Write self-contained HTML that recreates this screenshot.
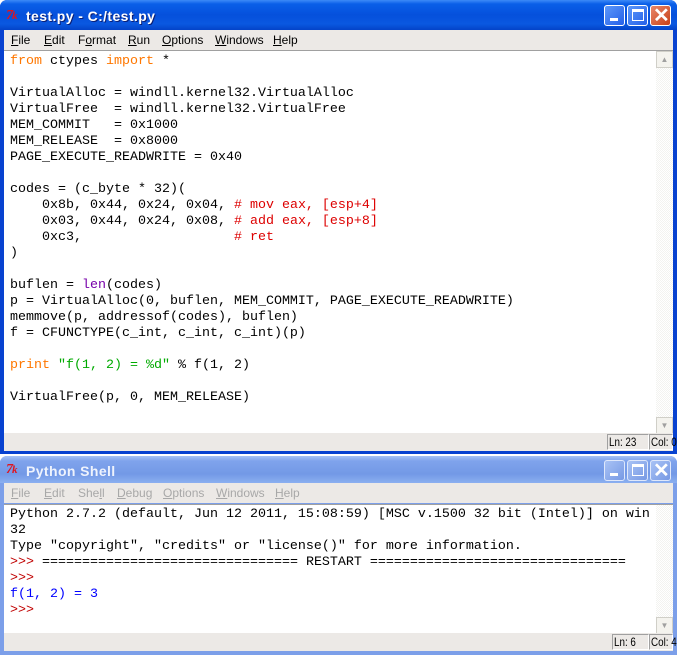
<!DOCTYPE html>
<html><head><meta charset="utf-8"><style>
*{margin:0;padding:0;box-sizing:border-box}
body{width:677px;height:655px;background:#fff;position:relative;overflow:hidden;font-family:"Liberation Sans",sans-serif}
.win{position:absolute;left:0;width:677px;border-radius:7px 7px 0 0;background:#0842d0;}
.title{position:absolute;left:0;top:0;right:0;height:30px;border-radius:7px 7px 0 0;background:linear-gradient(#3d8af7 0,#0a5fe8 4px,#0550dc 15px,#0a58e0 24px,#0443c8 30px);}
.ina .title{background:linear-gradient(#a6c2f5 0,#7fa3ec 5px,#7399e6 18px,#8bb0f0 27px)}
.ina{background:#7c9fe9}
.ttext{position:absolute;left:26px;top:8px;color:#fff;font-weight:bold;font-size:14px;letter-spacing:0.4px;white-space:nowrap;text-shadow:1px 1px #0a1e74}
.ina .ttext{text-shadow:none;color:#eef3fd}
.logo{position:absolute;left:6px;top:8px;color:#e0141e;font:italic bold 14px "Liberation Serif",serif;letter-spacing:-1px}
.btn{position:absolute;top:5px;width:21px;height:21px;border:1px solid #fff;border-radius:3px;background:linear-gradient(135deg,#5c98fa,#2560e8);}
.ina .btn{background:linear-gradient(135deg,#a8c2f5,#7799e4);border-color:#dfe8fb}
.close{background:linear-gradient(135deg,#e9876a,#c74118)}
.menu{position:absolute;left:4px;right:4px;top:30px;height:20px;background:#ece9e6;font-size:12px;}
.menu span{position:absolute;top:3px}
.ina .menu span{color:#a8a8a8}
.client{position:absolute;left:4px;right:4px;background:#fff;border-top:1px solid #a0a0a0}
pre{position:absolute;left:6px;font:13.33px/16px "Liberation Mono",monospace;color:#000}
.sb{position:absolute;right:0;top:0;width:17px;background:repeating-conic-gradient(#f3f3f0 0 25%,#fff 0 50%) 0 0/2px 2px}
.arr{position:absolute;left:0;width:17px;height:17px;background:#f4f3ee;border:1px solid #d0cfc8;color:#a0a0a0;font-size:8px;text-align:center;line-height:15px}
.status{position:absolute;left:4px;right:4px;height:18px;background:#ece9e6;font-size:12px}
.cell{position:absolute;top:1px;height:16px;border:1px solid;border-color:#a0a0a0 #fff #fff #a0a0a0;padding:0 1px;line-height:14px;white-space:nowrap;font-size:12px}
.cell span{display:inline-block;transform:scaleX(.82);transform-origin:0 0;white-space:nowrap}
.o{color:#ff7700}.r{color:#dd0000}.p{color:#7700aa}.g{color:#00aa00}.b{color:#0000ff}.rr{color:#c00000}
</style></head><body>

<div class="win" style="top:0;height:454px">
 <div class="title"><span class="logo">7<span style="font-size:11px">k</span></span><span class="ttext">test.py - C:/test.py</span>
  <div class="btn" style="left:604px"><div style="position:absolute;left:5px;top:12px;width:8px;height:3px;background:#fff"></div></div>
  <div class="btn" style="left:627px"><div style="position:absolute;left:4px;top:3px;width:12px;height:12px;border:1px solid #fff;border-top-width:3px"></div></div>
  <div class="btn close" style="left:650px"><div style="position:absolute;left:2px;top:-3px;color:#fff;font:bold 20px 'Liberation Sans'">✕</div></div>
 </div>
 <div class="menu"><span style="left:7px"><u>F</u>ile</span><span style="left:40px"><u>E</u>dit</span><span style="left:74px">F<u>o</u>rmat</span><span style="left:124px"><u>R</u>un</span><span style="left:158px"><u>O</u>ptions</span><span style="left:211px"><u>W</u>indows</span><span style="left:269px"><u>H</u>elp</span></div>
 <div class="client" style="top:50px;height:383px">
  <pre style="top:3px"><span class="o">from</span> ctypes <span class="o">import</span> *

VirtualAlloc = windll.kernel32.VirtualAlloc
VirtualFree  = windll.kernel32.VirtualFree
MEM_COMMIT   = 0x1000
MEM_RELEASE  = 0x8000
PAGE_EXECUTE_READWRITE = 0x40

codes = (c_byte * 32)(
    0x8b, 0x44, 0x24, 0x04, <span class="r"># mov eax, [esp+4]</span>
    0x03, 0x44, 0x24, 0x08, <span class="r"># add eax, [esp+8]</span>
    0xc3,                   <span class="r"># ret</span>
)

buflen = <span class="p">len</span>(codes)
p = VirtualAlloc(0, buflen, MEM_COMMIT, PAGE_EXECUTE_READWRITE)
memmove(p, addressof(codes), buflen)
f = CFUNCTYPE(c_int, c_int, c_int)(p)

<span class="o">print</span> <span class="g">"f(1, 2) = %d"</span> % f(1, 2)

VirtualFree(p, 0, MEM_RELEASE)</pre>
  <div class="sb" style="height:383px"><div class="arr" style="top:0">▲</div><div class="arr" style="top:366px">▼</div></div>
 </div>
 <div class="status" style="top:433px"><div class="cell" style="left:603px;width:42px"><span>Ln: 23</span></div><div class="cell" style="left:645px;width:24px"><span>Col: 0</span></div></div>
</div>

<div class="win ina" style="top:456px;height:199px">
 <div class="title" style="height:27px"><span class="logo" style="top:6px">7<span style="font-size:11px">k</span></span><span class="ttext" style="top:7px">Python Shell</span>
  <div class="btn" style="left:604px;top:4px"><div style="position:absolute;left:5px;top:12px;width:8px;height:3px;background:#fff"></div></div>
  <div class="btn" style="left:627px;top:4px"><div style="position:absolute;left:4px;top:3px;width:12px;height:12px;border:1px solid #fff;border-top-width:3px"></div></div>
  <div class="btn" style="left:650px;top:4px"><div style="position:absolute;left:2px;top:-3px;color:#fff;font:bold 20px 'Liberation Sans'">✕</div></div>
 </div>
 <div class="menu" style="top:27px"><span style="left:7px"><u>F</u>ile</span><span style="left:40px"><u>E</u>dit</span><span style="left:74px">She<u>l</u>l</span><span style="left:113px"><u>D</u>ebug</span><span style="left:159px"><u>O</u>ptions</span><span style="left:212px"><u>W</u>indows</span><span style="left:271px"><u>H</u>elp</span></div>
 <div class="client" style="top:48px;height:129px">
  <pre style="top:2px">Python 2.7.2 (default, Jun 12 2011, 15:08:59) [MSC v.1500 32 bit (Intel)] on win
32
Type "copyright", "credits" or "license()" for more information.
<span class="rr">&gt;&gt;&gt; </span>================================ RESTART ================================
<span class="rr">&gt;&gt;&gt; </span>
<span class="b">f(1, 2) = 3</span>
<span class="rr">&gt;&gt;&gt; </span></pre>
  <div class="sb" style="height:129px"><div class="arr" style="top:112px">▼</div></div>
 </div>
 <div class="status" style="top:177px"><div class="cell" style="left:608px;width:37px"><span>Ln: 6</span></div><div class="cell" style="left:645px;width:24px"><span>Col: 4</span></div></div>
</div>
</body></html>
